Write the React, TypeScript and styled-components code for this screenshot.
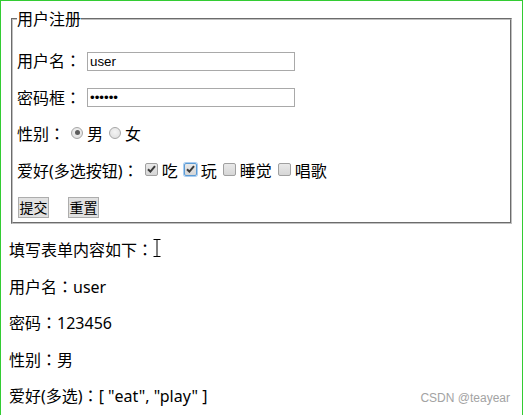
import React from "react";
import styled, { createGlobalStyle } from "styled-components";

const GlobalStyle = createGlobalStyle`
  html, body {
    margin: 0;
    padding: 0;
    background: #ffffff;
  }
  body {
    font-family: "Noto Sans", "Noto Sans CJK SC", sans-serif;
    font-size: 16px;
    color: #000;
  }
`;

const Frame = styled.div`
  position: relative;
  box-sizing: border-box;
  width: 523px;
  height: 415px;
  padding: 8px;
  border: 1px solid #33cc33;
  border-bottom: none;
  background: #ffffff;
  overflow: hidden;
`;

const FieldSet = styled.fieldset`
  margin: 0 2px;
  padding: 6px 4px 4px 4px;
  border: 2px groove #c0c0c0;
  min-width: 0;
`;

const Legend = styled.legend`
  padding: 0;
  line-height: 20px;
  font-size: 16px;
`;

const Row = styled.div`
  display: flex;
  align-items: center;
  height: 20.5px;
  margin: 16px 0;
  line-height: 20.5px;
  white-space: nowrap;
`;

// full-width colon centred in its box, as in the reference
const Colon = styled.span`
  font-family: "Noto Sans CJK TC", "Noto Sans CJK SC", sans-serif;
  line-height: 0;
`;

const TextInput = styled.input`
  box-sizing: border-box;
  width: 208px;
  height: 19px;
  margin: 0 0 0 6px;
  padding: 1px 2px;
  border: 1px solid #a9a9a9;
  background: #fff;
  font-family: "Liberation Sans", Arial, sans-serif;
  font-size: 13.33px;
  color: #000;
  outline: none;
`;

const Radio = styled.span<{ $checked?: boolean }>`
  position: relative;
  box-sizing: border-box;
  width: 12px;
  height: 12px;
  margin: 0 4px 3px 6px;
  border-radius: 50%;
  border: 1px solid #a6a6a6;
  background: radial-gradient(circle at 50% 40%, #f4f4f4 0%, #dcdcdc 100%);
  flex: none;

  &::after {
    content: "";
    display: ${(p) => (p.$checked ? "block" : "none")};
    position: absolute;
    left: 2.5px;
    top: 2.5px;
    width: 5px;
    height: 5px;
    border-radius: 50%;
    background: #5c5c5c;
  }
`;

const CheckBox = styled.span<{ $focus?: boolean }>`
  display: inline-flex;
  align-items: center;
  justify-content: center;
  box-sizing: border-box;
  width: 13px;
  height: 13px;
  margin: 0 4px 3px 6px;
  border-radius: 2px;
  border: 1px solid ${(p) => (p.$focus ? "#5b9bd5" : "#a0a0a0")};
  box-shadow: ${(p) => (p.$focus ? "0 0 0 1px #a9cdf1" : "none")};
  background: linear-gradient(#e9e9e9, #d6d6d6);
  flex: none;
`;

const Opt = styled.span`
  display: inline-block;
`;

const ButtonRow = styled.div`
  display: flex;
  gap: 19px;
  margin: 15px 0 0 1px;
`;

const Button = styled.button`
  box-sizing: border-box;
  width: 31px;
  height: 21px;
  padding: 0;
  margin: 0;
  border: 1px solid #adadad;
  background: #e1e1e1;
  font-family: "Noto Sans CJK SC", sans-serif;
  font-size: 14px;
  line-height: 19px;
  color: #000;
`;

const Output = styled.p`
  margin: 16px 0;
  line-height: 20.5px;
`;

const Cursor = styled.svg`
  position: absolute;
  left: 152px;
  top: 238px;
`;

const Watermark = styled.span`
  position: absolute;
  right: 12px;
  bottom: 10px;
  font-family: "Liberation Sans", Arial, sans-serif;
  font-size: 12px;
  color: #a3a3a3;
`;

function Tick() {
  return (
    <svg width="9" height="8" viewBox="0 0 9 8">
      <path d="M1 4.2 L3.4 6.6 L8 1.2" fill="none" stroke="#3a3a3a" strokeWidth="2" />
    </svg>
  );
}

export default function App() {
  return (
    <>
      <GlobalStyle />
      <Frame>
        <FieldSet>
          <Legend>用户注册</Legend>
          <Row>
            <Opt>
              用户名<Colon>：</Colon>
            </Opt>
            <TextInput type="text" defaultValue="user" />
          </Row>
          <Row>
            <Opt>
              密码框<Colon>：</Colon>
            </Opt>
            <TextInput type="password" defaultValue="123456" />
          </Row>
          <Row>
            <Opt>
              性别<Colon>：</Colon>
            </Opt>
            <Radio $checked />
            <Opt>男</Opt>
            <Radio />
            <Opt>女</Opt>
          </Row>
          <Row>
            <Opt>
              爱好(多选按钮)<Colon>：</Colon>
            </Opt>
            <CheckBox>
              <Tick />
            </CheckBox>
            <Opt>吃</Opt>
            <CheckBox $focus>
              <Tick />
            </CheckBox>
            <Opt>玩</Opt>
            <CheckBox />
            <Opt>睡觉</Opt>
            <CheckBox />
            <Opt>唱歌</Opt>
          </Row>
          <ButtonRow>
            <Button>提交</Button>
            <Button>重置</Button>
          </ButtonRow>
        </FieldSet>
        <Output>
          填写表单内容如下<Colon>：</Colon>
        </Output>
        <Output>
          用户名<Colon>：</Colon>user
        </Output>
        <Output>
          密码<Colon>：</Colon>123456
        </Output>
        <Output>
          性别<Colon>：</Colon>男
        </Output>
        <Output>
          爱好(多选)<Colon>：</Colon>[ "eat", "play" ]
        </Output>
        <Cursor width="8" height="18" viewBox="0 0 8 18">
          <path d="M0.5 0.5 H7.5 M4 0.5 V17.5 M0.5 17.5 H7.5" fill="none" stroke="#000" strokeWidth="1" />
        </Cursor>
        <Watermark>CSDN @teayear</Watermark>
      </Frame>
    </>
  );
}
